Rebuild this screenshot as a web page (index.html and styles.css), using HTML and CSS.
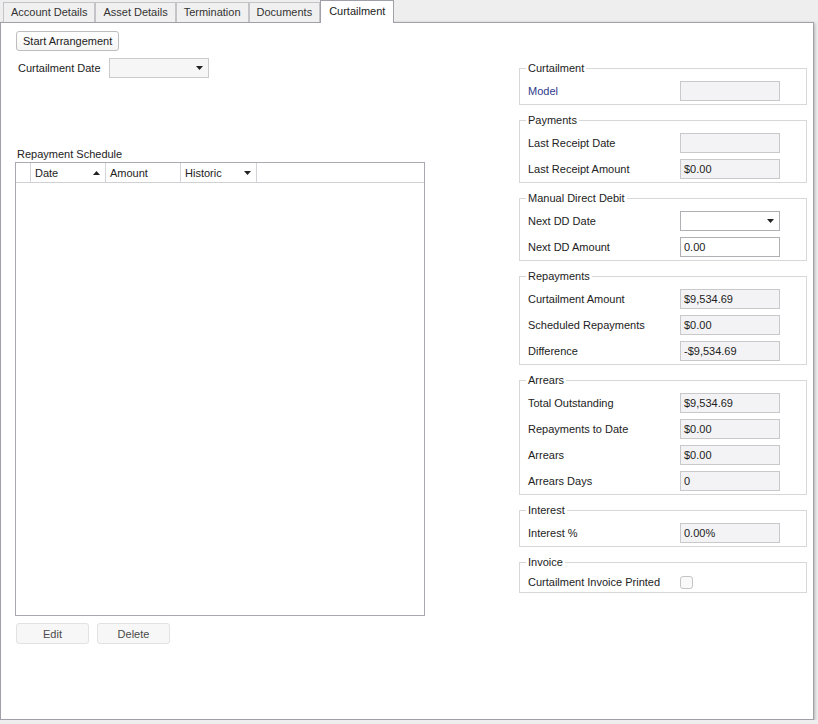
FILE: index.html
```html
<!DOCTYPE html>
<html lang="en">

<head>
    <meta charset="UTF-8">
    <meta name="viewport" content="width=device-width, initial-scale=1.0">
    <title>Curtailment</title>
    <link rel="stylesheet" href="styles.css">
</head>

<body>
    <div class="tabs">
        <div class="tab">Account Details</div>
        <div class="tab">Asset Details</div>
        <div class="tab">Termination</div>
        <div class="tab">Documents</div>
        <div class="tab active">Curtailment</div>
    </div>

    <div class="panel">
        <!-- Left column: arrangement + schedule grid -->
        <div class="left-column">
            <button class="start-btn" type="button">Start Arrangement</button>

            <div class="date-row">
                <label class="date-label">Curtailment Date</label>
                <div class="combo readonly">
                    <svg class="arrow" width="7" height="4" viewBox="0 0 7 4"><path d="M0 0h7L3.5 4z" fill="#222"/></svg>
                </div>
            </div>

            <div class="caption">Repayment Schedule</div>
            <div class="grid">
                <div class="grid-head">
                    <div class="gh indicator"></div>
                    <div class="gh col-date">Date
                        <svg class="sort" width="7" height="4" viewBox="0 0 7 4"><path d="M3.5 0L7 4H0z" fill="#222"/></svg>
                    </div>
                    <div class="gh col-amount">Amount</div>
                    <div class="gh col-historic">Historic
                        <svg class="sort" width="7" height="4" viewBox="0 0 7 4"><path d="M0 0h7L3.5 4z" fill="#222"/></svg>
                    </div>
                </div>
            </div>

            <div class="grid-buttons">
                <button class="flat-btn" type="button">Edit</button>
                <button class="flat-btn" type="button">Delete</button>
            </div>
        </div>

        <!-- Right column: grouped fields -->
        <div class="right-column">
            <fieldset class="group">
                <legend>Curtailment</legend>
                <div class="row">
                    <label class="field-label link">Model</label>
                    <div class="field readonly"></div>
                </div>
            </fieldset>

            <fieldset class="group">
                <legend>Payments</legend>
                <div class="row">
                    <label class="field-label">Last Receipt Date</label>
                    <div class="field readonly"></div>
                </div>
                <div class="row">
                    <label class="field-label">Last Receipt Amount</label>
                    <div class="field readonly">$0.00</div>
                </div>
            </fieldset>

            <fieldset class="group">
                <legend>Manual Direct Debit</legend>
                <div class="row">
                    <label class="field-label">Next DD Date</label>
                    <div class="field editable combo">
                        <svg class="arrow" width="7" height="4" viewBox="0 0 7 4"><path d="M0 0h7L3.5 4z" fill="#222"/></svg>
                    </div>
                </div>
                <div class="row">
                    <label class="field-label">Next DD Amount</label>
                    <div class="field editable">0.00</div>
                </div>
            </fieldset>

            <fieldset class="group">
                <legend>Repayments</legend>
                <div class="row">
                    <label class="field-label">Curtailment Amount</label>
                    <div class="field readonly">$9,534.69</div>
                </div>
                <div class="row">
                    <label class="field-label">Scheduled Repayments</label>
                    <div class="field readonly">$0.00</div>
                </div>
                <div class="row">
                    <label class="field-label">Difference</label>
                    <div class="field readonly">-$9,534.69</div>
                </div>
            </fieldset>

            <fieldset class="group">
                <legend>Arrears</legend>
                <div class="row">
                    <label class="field-label">Total Outstanding</label>
                    <div class="field readonly">$9,534.69</div>
                </div>
                <div class="row">
                    <label class="field-label">Repayments to Date</label>
                    <div class="field readonly">$0.00</div>
                </div>
                <div class="row">
                    <label class="field-label">Arrears</label>
                    <div class="field readonly">$0.00</div>
                </div>
                <div class="row">
                    <label class="field-label">Arrears Days</label>
                    <div class="field readonly">0</div>
                </div>
            </fieldset>

            <fieldset class="group">
                <legend>Interest</legend>
                <div class="row">
                    <label class="field-label">Interest %</label>
                    <div class="field readonly">0.00%</div>
                </div>
            </fieldset>

            <fieldset class="group">
                <legend>Invoice</legend>
                <div class="row check-row">
                    <label class="field-label">Curtailment Invoice Printed</label>
                    <div class="checkbox"></div>
                </div>
            </fieldset>
        </div>
    </div>
</body>

</html>
```

FILE: styles.css
```css
* {
    box-sizing: border-box;
}

body {
    font-family: "Liberation Sans", Arial, sans-serif;
    font-size: 11px;
    color: #222;
    margin: 0;
    padding: 0;
    background-color: #eeeeee;
}

/* Tab strip */
.tabs {
    display: flex;
    align-items: flex-end;
    height: 22px;
    padding-left: 3px;
}

.tab {
    height: 20px;
    line-height: 19px;
    padding: 0 7px;
    border: 1px solid #c4c4c8;
    border-bottom: none;
    background-color: #f0f0f0;
    color: #333;
    white-space: nowrap;
}

.tab.active {
    position: relative;
    z-index: 1;
    height: 23px;
    line-height: 20px;
    margin-bottom: -1px;
    padding: 0 8px;
    border-color: #a0a0a8;
    background-color: #fff;
    color: #222;
}

/* Main panel */
.panel {
    display: flex;
    width: 814px;
    height: 698px;
    border: 1px solid #a0a0a8;
    background-color: #fff;
    box-shadow: 1px 1px 3px rgba(0, 0, 0, 0.25);
    padding: 8px 0 0 14px;
}

.left-column {
    display: flex;
    flex-direction: column;
    align-items: flex-start;
    width: 410px;
}

.start-btn {
    height: 20px;
    margin-left: 1px;
    padding: 0 6px;
    font-family: inherit;
    font-size: 11px;
    color: #222;
    border: 1px solid #bdbdbd;
    border-radius: 3px;
    background: linear-gradient(#ffffff, #f5f5f5);
}

.date-row {
    display: flex;
    align-items: center;
    height: 20px;
    margin-top: 7px;
}

.date-label {
    width: 94px;
    padding-left: 3px;
}

.combo {
    display: flex;
    align-items: center;
    justify-content: flex-end;
    width: 100px;
    height: 20px;
    padding-right: 5px;
}

.combo.readonly {
    border: 1px solid #cbcbcb;
    background-color: #f6f6f7;
}

.caption {
    height: 14px;
    line-height: 14px;
    margin-top: 69px;
    padding-left: 2px;
}

.grid {
    width: 410px;
    height: 454px;
    margin-top: 1px;
    border: 1px solid #a8a8b0;
}

.grid-head {
    display: flex;
    height: 20px;
    border-bottom: 1px solid #d0d0d4;
}

.gh {
    display: flex;
    align-items: center;
    justify-content: space-between;
    padding: 0 5px 0 4px;
    border-right: 1px solid #d4d4d8;
}

.indicator {
    width: 15px;
}

.col-date,
.col-amount {
    width: 75px;
}

.col-historic {
    width: 76px;
}

.grid-buttons {
    display: flex;
    gap: 8px;
    margin-top: 7px;
    margin-left: 1px;
}

.flat-btn {
    width: 73px;
    height: 21px;
    font-family: inherit;
    font-size: 11px;
    color: #4a4a4a;
    border: 1px solid #e2e2e2;
    border-radius: 3px;
    background-color: #f7f7f7;
}

/* Right column groups */
.right-column {
    width: 288px;
    margin-left: 94px;
    margin-top: 31px;
}

.group {
    margin: 0 0 9px;
    padding: 6px 26px 3px 8px;
    border: 1px solid #d8d8d8;
    min-width: 0;
}

.group legend {
    padding: 0 2px;
    margin-left: -2px;
    line-height: 13px;
}

.row {
    display: flex;
    align-items: center;
    height: 20px;
}

.row + .row {
    margin-top: 6px;
}

.field-label {
    width: 152px;
}

.field-label.link {
    color: #2e3a8c;
}

.field {
    width: 100px;
    height: 20px;
    line-height: 18px;
    padding-left: 3px;
}

.field.readonly {
    border: 1px solid #c9c9cc;
    background-color: #f3f3f5;
}

.field.editable {
    border: 1px solid #b0b0b4;
    background-color: #fff;
}

.field.combo {
    padding-right: 5px;
}

.check-row {
    height: 14px;
}

.checkbox {
    width: 13px;
    height: 13px;
    border: 1px solid #c4c4c4;
    border-radius: 3px;
    background-color: #f9f9f9;
}
```
